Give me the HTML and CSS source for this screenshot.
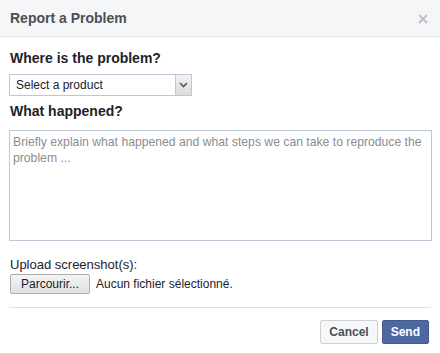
FILE: index.html
```html
<html>
<head>
<title>Report a Problem</title>
<link rel="stylesheet" href="styles.css">
</head>

<body>
<div class="dialog">

<!-- ====================================================== -->
<div class="dialog-head">
    <span class="dialog-title">Report a Problem</span>
    <span class="dialog-close">
        <svg width="10" height="10" viewBox="0 0 10 10"><path d="M1 1 L9 9 M9 1 L1 9" stroke="#bec2c9" stroke-width="2"/></svg>
    </span>
</div>

<!-- ====================================================== -->
<div class="dialog-body">
    <div class="field-label">Where is the problem?</div>
    <div class="product-select">
        <span class="product-select-text">Select a product</span>
        <span class="product-select-arrow">
            <svg width="9" height="6" viewBox="0 0 9 6"><path d="M1 1 L4.5 4.5 L8 1" fill="none" stroke="#555" stroke-width="1.6"/></svg>
        </span>
    </div>

    <div class="field-label field-label-second">What happened?</div>
    <textarea class="problem-text" placeholder="Briefly explain what happened and what steps we can take to reproduce the problem ..."></textarea>

    <div class="upload-label">Upload screenshot(s):</div>
    <div class="upload-row">
        <span class="upload-button">Parcourir...</span>
        <span class="upload-status">Aucun fichier sélectionné.</span>
    </div>
</div>

<!-- ====================================================== -->
<div class="dialog-foot">
    <span class="btn btn-cancel">Cancel</span>
    <span class="btn btn-send">Send</span>
</div>

</div>
</body>
</html>
```

FILE: styles.css
```css
/*-----------------------------------------------------------------*/
body {
    margin:             0;
    background:         #FFF;
    font-family:        "Liberation Sans", Arial, sans-serif;
    color:              #1d2129;
}

/*-----------------------------------------------------------------*/
.dialog-head {
    height:             36px;
    padding:            0 10px;
    background:         #f5f6f7;
    border-bottom:      1px solid #e5e5e5;
    display:            flex;
    align-items:        center;
    justify-content:    space-between;
}

.dialog-title {
    font-size:          14px;
    font-weight:        bold;
    color:              #4b4f56;
}

.dialog-close {
    display:            flex;
    margin-right:       2px;
    margin-top:         2px;
}

/*-----------------------------------------------------------------*/
.dialog-body {
    padding:            13px 8px 0 9px;
}

.field-label {
    font-size:          14px;
    line-height:        17px;
    font-weight:        bold;
    padding-left:       1px;
    margin-bottom:      7px;
}

.field-label-second {
    margin-top:         7px;
    margin-bottom:      10px;
}

/*-----------------------------------------------------------------*/
.product-select {
    width:              181px;
    height:             20px;
    border:             1px solid #bdc7d8;
    display:            flex;
    align-items:        stretch;
    font-size:          12px;
}

.product-select-text {
    flex:               1;
    padding-left:       6px;
    line-height:        20px;
}

.product-select-arrow {
    width:              15px;
    border-left:        1px solid #c8c8c8;
    background:         linear-gradient(#f2f2f2, #dcdcdc);
    display:            flex;
    align-items:        center;
    justify-content:    center;
}

/*-----------------------------------------------------------------*/
.problem-text {
    display:            block;
    box-sizing:         border-box;
    width:              423px;
    height:             111px;
    margin:             0;
    padding:            3px 3px;
    border:             1px solid #bdc7d8;
    resize:             none;
    font-family:        "Liberation Sans", Arial, sans-serif;
    font-size:          12.2px;
    line-height:        16px;
}

.problem-text::placeholder {
    color:              #8a8d91;
}

/*-----------------------------------------------------------------*/
.upload-label {
    margin-top:         16px;
    font-size:          13px;
    line-height:        16px;
    padding-left:       1px;
}

.upload-row {
    margin-top:         1px;
    display:            flex;
    align-items:        center;
    font-size:          12px;
}

.upload-button {
    box-sizing:         border-box;
    width:              80px;
    height:             20px;
    margin-left:        1px;
    border:             1px solid #adadad;
    border-radius:      2px;
    background:         linear-gradient(#f4f4f4, #e1e1e1);
    text-align:         center;
    line-height:        18px;
}

.upload-status {
    margin-left:        6px;
}

/*-----------------------------------------------------------------*/
.dialog-foot {
    margin:             13px 9px 0 9px;
    padding-top:        12px;
    border-top:         1px solid #dddfe2;
    display:            flex;
    justify-content:    flex-end;
    gap:                4px;
    padding-right:      2px;
}

.btn {
    box-sizing:         border-box;
    height:             24px;
    padding:            0 8px;
    border:             1px solid;
    border-radius:      2px;
    font-size:          12px;
    font-weight:        bold;
    line-height:        22px;
}

.btn-cancel {
    background:         #f6f7f9;
    border-color:       #ced0d4;
    color:              #4b4f56;
}

.btn-send {
    background:         #4e69a2;
    border-color:       #435a8b;
    color:              #FFF;
}
```
